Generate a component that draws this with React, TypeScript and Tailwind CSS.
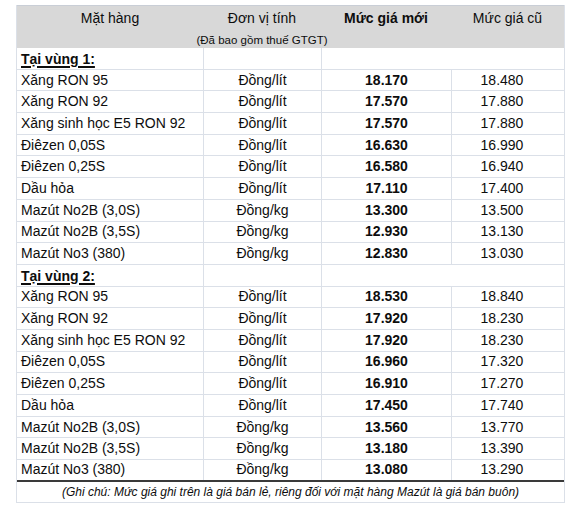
import React from "react";

type Row = { name: string; unit: string; now: string; old: string };

const zone1: Row[] = [
  { name: "Xăng RON 95", unit: "Đồng/lít", now: "18.170", old: "18.480" },
  { name: "Xăng RON 92", unit: "Đồng/lít", now: "17.570", old: "17.880" },
  { name: "Xăng sinh học E5 RON 92", unit: "Đồng/lít", now: "17.570", old: "17.880" },
  { name: "Điêzen 0,05S", unit: "Đồng/lít", now: "16.630", old: "16.990" },
  { name: "Điêzen 0,25S", unit: "Đồng/lít", now: "16.580", old: "16.940" },
  { name: "Dầu hỏa", unit: "Đồng/lít", now: "17.110", old: "17.400" },
  { name: "Mazút No2B (3,0S)", unit: "Đồng/kg", now: "13.300", old: "13.500" },
  { name: "Mazút No2B (3,5S)", unit: "Đồng/kg", now: "12.930", old: "13.130" },
  { name: "Mazút No3 (380)", unit: "Đồng/kg", now: "12.830", old: "13.030" },
];

const zone2: Row[] = [
  { name: "Xăng RON 95", unit: "Đồng/lít", now: "18.530", old: "18.840" },
  { name: "Xăng RON 92", unit: "Đồng/lít", now: "17.920", old: "18.230" },
  { name: "Xăng sinh học E5 RON 92", unit: "Đồng/lít", now: "17.920", old: "18.230" },
  { name: "Điêzen 0,05S", unit: "Đồng/lít", now: "16.960", old: "17.320" },
  { name: "Điêzen 0,25S", unit: "Đồng/lít", now: "16.910", old: "17.270" },
  { name: "Dầu hỏa", unit: "Đồng/lít", now: "17.450", old: "17.740" },
  { name: "Mazút No2B (3,0S)", unit: "Đồng/kg", now: "13.560", old: "13.770" },
  { name: "Mazút No2B (3,5S)", unit: "Đồng/kg", now: "13.180", old: "13.390" },
  { name: "Mazút No3 (380)", unit: "Đồng/kg", now: "13.080", old: "13.290" },
];

const rowCls = "flex h-[21.7px] border-b border-[#dbe0e8] items-center";

function ZoneTitle({ label }: { label: string }) {
  return (
    <div className={rowCls}>
      <div className="w-[186px] pl-[4px] pt-[2px] font-bold underline decoration-2 underline-offset-2">{label}</div>
      <div className="w-[118px] h-full border-l border-[#dbe0e8]" />
      <div className="w-[130px] h-full border-l border-[#dbe0e8]" />
      <div className="flex-1 h-full" />
    </div>
  );
}

function Item({ r, last }: { r: Row; last?: boolean }) {
  return (
    <div
      className={`flex h-[21.7px] items-center ${last ? "border-b-2 border-[#3a3a3a]" : "border-b border-[#dbe0e8]"}`}
    >
      <div className="w-[186px] pl-[4px] whitespace-nowrap">{r.name}</div>
      <div className="w-[118px] h-full flex items-center justify-center border-l border-[#dbe0e8]">{r.unit}</div>
      <div className="w-[130px] h-full flex items-center justify-center border-l border-[#dbe0e8] font-bold">{r.now}</div>
      <div className="flex-1 h-full flex items-center justify-center border-l border-[#dbe0e8] pr-[12px]">{r.old}</div>
    </div>
  );
}

export default function App() {
  return (
    <div className="w-[583px] h-[509px] bg-white pt-[5px] pl-[16px] font-['Liberation_Sans',Arial,sans-serif] text-[14px] text-[#0d0d0d]">
      <div className="w-[549px] border-l border-r border-[#dbe0e8]">
        {/* header */}
        <div className="h-[43px] bg-[#d8d8d8] border-t border-[#c9ced6] flex">
          <div className="w-[186px] flex justify-center pt-[2px]">Mặt hàng</div>
          <div className="w-[118px] flex flex-col items-center pt-[2px]">
            <span>Đơn vị tính</span>
            <span className="whitespace-nowrap text-[11.5px] mt-[3px]">(Đã bao gồm thuế GTGT)</span>
          </div>
          <div className="w-[130px] flex justify-center pt-[2px] font-bold">Mức giá mới</div>
          <div className="flex-1 flex justify-center pt-[2px]">Mức giá cũ</div>
        </div>

        <ZoneTitle label="Tại vùng 1:" />
        {zone1.map((r) => (
          <Item key={"a" + r.name} r={r} />
        ))}
        <ZoneTitle label="Tại vùng 2:" />
        {zone2.map((r, i) => (
          <Item key={"b" + r.name} r={r} last={i === zone2.length - 1} />
        ))}

        <div className="h-[21px] flex items-center justify-center border-b border-[#dbe0e8] italic text-[12px] whitespace-nowrap">
          (Ghi chú: Mức giá ghi trên là giá bán lẻ, riêng đối với mặt hàng Mazút là giá bán buôn)
        </div>
      </div>
    </div>
  );
}
